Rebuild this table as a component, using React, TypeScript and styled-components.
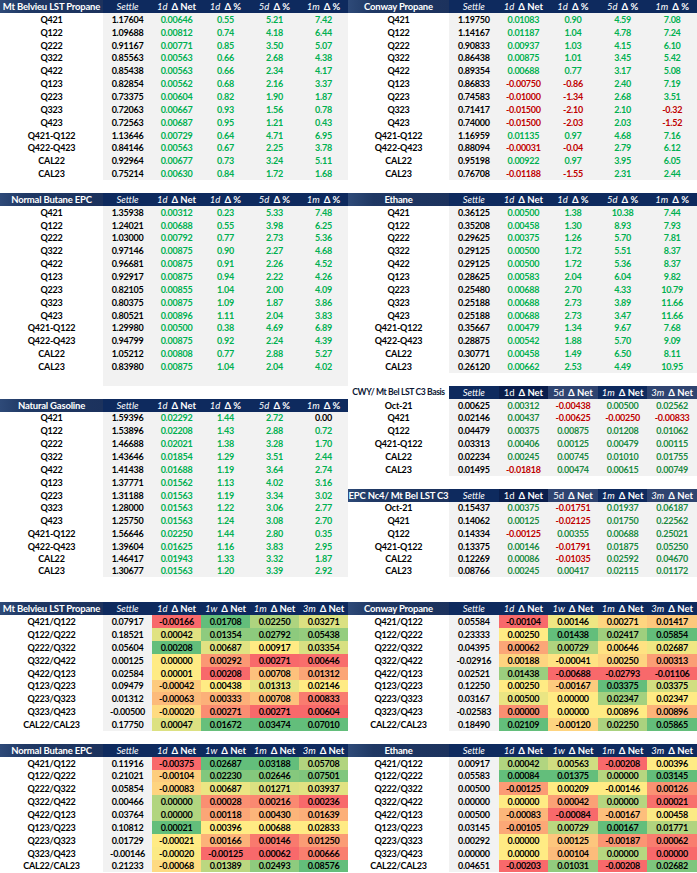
import React from "react";
import styled, { createGlobalStyle } from "styled-components";

const ROW = 12.87;
const SHORT = 10.8;

const GlobalStyle = createGlobalStyle`
  html, body {
    margin: 0;
    padding: 0;
    background: #fff;
  }
  body {
    font-family: Lato, "DejaVu Sans", sans-serif;
  }
`;

type Tone = "navy" | "deep" | "slate";
type Kind = "pct" | "basis" | "heat";
type Head = { pre: string; main?: string; upright?: boolean; tone?: Tone };

const PCT_HEADS: Head[] = [
  { pre: "Settle" },
  { pre: "1d", main: "Δ Net" },
  { pre: "1d", main: "Δ %" },
  { pre: "5d", main: "Δ %" },
  { pre: "1m", main: "Δ %" },
];

const BASIS_HEADS: Head[] = [
  { pre: "Settle", tone: "navy" },
  { pre: "1d", main: "Δ Net", upright: true, tone: "deep" },
  { pre: "5d", main: "Δ Net", upright: true, tone: "slate" },
  { pre: "1m", main: "Δ Net", tone: "navy" },
  { pre: "3m", main: "Δ Net", tone: "slate" },
];

const SPREAD_HEADS: Head[] = [
  { pre: "Settle" },
  { pre: "1d", main: "Δ Net" },
  { pre: "1w", main: "Δ Net" },
  { pre: "1m", main: "Δ Net" },
  { pre: "3m", main: "Δ Net" },
];

const rows = (text: string) =>
  text
    .trim()
    .split("\n")
    .map((l) => l.trim().split(/\s+/));

const mbPropane = rows(`
Q421 1.17604 0.00646 0.55 5.21 7.42
Q122 1.09688 0.00812 0.74 4.18 6.44
Q222 0.91167 0.00771 0.85 3.50 5.07
Q322 0.85563 0.00563 0.66 2.68 4.38
Q422 0.85438 0.00563 0.66 2.34 4.17
Q123 0.82854 0.00562 0.68 2.16 3.37
Q223 0.73375 0.00604 0.82 1.90 1.87
Q323 0.72063 0.00667 0.93 1.56 0.78
Q423 0.72563 0.00687 0.95 1.21 0.43
Q421-Q122 1.13646 0.00729 0.64 4.71 6.95
Q422-Q423 0.84146 0.00563 0.67 2.25 3.78
CAL22 0.92964 0.00677 0.73 3.24 5.11
CAL23 0.75214 0.00630 0.84 1.72 1.68
`);

const conwayPropane = rows(`
Q421 1.19750 0.01083 0.90 4.59 7.08
Q122 1.14167 0.01187 1.04 4.78 7.24
Q222 0.90833 0.00937 1.03 4.15 6.10
Q322 0.86438 0.00875 1.01 3.45 5.42
Q422 0.89354 0.00688 0.77 3.17 5.08
Q123 0.86833 -0.00750 -0.86 2.40 7.19
Q223 0.74583 -0.01000 -1.34 2.68 3.51
Q323 0.71417 -0.01500 -2.10 2.10 -0.32
Q423 0.74000 -0.01500 -2.03 2.03 -1.52
Q421-Q122 1.16959 0.01135 0.97 4.68 7.16
Q422-Q423 0.88094 -0.00031 -0.04 2.79 6.12
CAL22 0.95198 0.00922 0.97 3.95 6.05
CAL23 0.76708 -0.01188 -1.55 2.31 2.44
`);

const butaneEpc = rows(`
Q421 1.35938 0.00312 0.23 5.33 7.48
Q122 1.24021 0.00688 0.55 3.98 6.25
Q222 1.03000 0.00792 0.77 2.73 5.36
Q322 0.97146 0.00875 0.90 2.27 4.68
Q422 0.96681 0.00875 0.91 2.26 4.52
Q123 0.92917 0.00875 0.94 2.22 4.26
Q223 0.82105 0.00855 1.04 2.00 4.09
Q323 0.80375 0.00875 1.09 1.87 3.86
Q423 0.80521 0.00896 1.11 2.04 3.83
Q421-Q122 1.29980 0.00500 0.38 4.69 6.89
Q422-Q423 0.94799 0.00875 0.92 2.24 4.39
CAL22 1.05212 0.00808 0.77 2.88 5.27
CAL23 0.83980 0.00875 1.04 2.04 4.02
`);

const ethane = rows(`
Q421 0.36125 0.00500 1.38 10.38 7.44
Q122 0.35208 0.00458 1.30 8.93 7.93
Q222 0.29625 0.00375 1.26 5.70 7.81
Q322 0.29125 0.00500 1.72 5.51 8.37
Q422 0.29125 0.00500 1.72 5.36 8.37
Q123 0.28625 0.00583 2.04 6.04 9.82
Q223 0.25480 0.00688 2.70 4.33 10.79
Q323 0.25188 0.00688 2.73 3.89 11.66
Q423 0.25188 0.00688 2.73 3.47 11.66
Q421-Q122 0.35667 0.00479 1.34 9.67 7.68
Q422-Q423 0.28875 0.00542 1.88 5.70 9.09
CAL22 0.30771 0.00458 1.49 6.50 8.11
CAL23 0.26120 0.00662 2.53 4.49 10.95
`);

const natGasoline = rows(`
Q421 1.59396 0.02292 1.44 2.72 0.00
Q122 1.53896 0.02208 1.43 2.88 0.72
Q222 1.46688 0.02021 1.38 3.28 1.70
Q322 1.43646 0.01854 1.29 3.51 2.44
Q422 1.41438 0.01688 1.19 3.64 2.74
Q123 1.37771 0.01562 1.13 4.02 3.16
Q223 1.31188 0.01563 1.19 3.34 3.02
Q323 1.28000 0.01563 1.22 3.06 2.77
Q423 1.25750 0.01563 1.24 3.08 2.70
Q421-Q122 1.56646 0.02250 1.44 2.80 0.35
Q422-Q423 1.39604 0.01625 1.16 3.83 2.95
CAL22 1.46417 0.01943 1.33 3.32 1.87
CAL23 1.30677 0.01563 1.20 3.39 2.92
`);

const cwyBasis = rows(`
Oct-21 0.00625 0.00312 -0.00438 0.00500 0.02562
Q421 0.02146 0.00437 -0.00625 -0.00250 -0.00833
Q122 0.04479 0.00375 0.00875 0.01208 0.01062
Q421-Q122 0.03313 0.00406 0.00125 0.00479 0.00115
CAL22 0.02234 0.00245 0.00745 0.01010 0.01755
CAL23 0.01495 -0.01818 0.00474 0.00615 0.00749
`);

const epcBasis = rows(`
Oct-21 0.15437 0.00375 -0.01751 0.01937 0.06187
Q421 0.14062 0.00125 -0.02125 0.01750 0.22562
Q122 0.14334 -0.00125 0.00355 0.00688 0.25021
Q421-Q122 0.13375 0.00146 -0.01791 0.01875 0.05250
CAL22 0.12269 0.00086 -0.01035 0.02592 0.04670
CAL23 0.08766 0.00245 0.00417 0.02115 0.01172
`);

const mbSpreads = rows(`
Q421/Q122 0.07917 -0.00166 0.01708 0.02250 0.03271
Q122/Q222 0.18521 0.00042 0.01354 0.02792 0.05438
Q222/Q322 0.05604 0.00208 0.00687 0.00917 0.03354
Q322/Q422 0.00125 0.00000 0.00292 0.00271 0.00646
Q422/Q123 0.02584 0.00001 0.00208 0.00708 0.01312
Q123/Q223 0.09479 -0.00042 0.00438 0.01313 0.02146
Q223/Q323 0.01312 -0.00063 0.00333 0.00708 0.00833
Q323/Q423 -0.00500 -0.00020 0.00271 0.00271 0.00604
CAL22/CAL23 0.17750 0.00047 0.01672 0.03474 0.07010
`);

const conwaySpreads = rows(`
Q421/Q122 0.05584 -0.00104 0.00146 0.00271 0.01417
Q122/Q222 0.23333 0.00250 0.01438 0.02417 0.05854
Q222/Q322 0.04395 0.00062 0.00729 0.00646 0.02687
Q322/Q422 -0.02916 0.00188 -0.00041 0.00250 0.00313
Q422/Q123 0.02521 0.01438 -0.00688 -0.02793 -0.01106
Q123/Q223 0.12250 0.00250 -0.00167 0.03375 0.03375
Q223/Q323 0.03167 0.00500 0.00000 0.02347 0.02347
Q323/Q423 -0.02583 0.00000 0.00000 0.00896 0.00896
CAL22/CAL23 0.18490 0.02109 -0.00120 0.02250 0.05865
`);

const butaneSpreads = rows(`
Q421/Q122 0.11916 -0.00375 0.02687 0.03188 0.05708
Q122/Q222 0.21021 -0.00104 0.02230 0.02646 0.07501
Q222/Q322 0.05854 -0.00083 0.00687 0.01271 0.03937
Q322/Q422 0.00466 0.00000 0.00028 0.00216 0.00236
Q422/Q123 0.03764 0.00000 0.00118 0.00430 0.01639
Q123/Q223 0.10812 0.00021 0.00396 0.00688 0.02833
Q223/Q323 0.01729 -0.00021 0.00166 0.00146 0.01250
Q323/Q423 -0.00146 -0.00020 -0.00125 0.00062 0.00666
CAL22/CAL23 0.21233 -0.00068 0.01389 0.02493 0.08576
`);

const ethaneSpreads = rows(`
Q421/Q122 0.00917 0.00042 0.00563 -0.00208 0.00396
Q122/Q222 0.05583 0.00084 0.01375 0.00000 0.03145
Q222/Q322 0.00500 -0.00125 0.00209 -0.00146 0.00126
Q322/Q422 0.00000 0.00000 0.00042 0.00000 0.00021
Q422/Q123 0.00500 -0.00083 -0.00084 -0.00167 0.00458
Q123/Q223 0.03145 -0.00105 0.00729 0.00167 0.01771
Q223/Q323 0.00292 0.00000 0.00125 -0.00187 0.00062
Q323/Q423 0.00000 0.00000 0.00104 0.00000 0.00000
CAL22/CAL23 0.04651 -0.00203 0.01031 -0.00208 0.02682
`);

// Excel style three colour scale: min red, 50th percentile yellow, max green
const RED = [248, 105, 107];
const YELLOW = [255, 235, 132];
const GREEN = [99, 190, 123];

const mix = (a: number[], b: number[], t: number) =>
  `rgb(${a.map((v, i) => Math.round(v + (b[i] - v) * t)).join(",")})`;

const heatColor = (v: number, column: number[]) => {
  const s = [...column].sort((a, b) => a - b);
  const min = s[0];
  const max = s[s.length - 1];
  const pos = (s.length - 1) * 0.5;
  const lo = Math.floor(pos);
  const mid = s[lo] + (s[Math.ceil(pos)] - s[lo]) * (pos - lo);
  if (v <= mid) return mix(RED, YELLOW, mid === min ? 1 : (v - min) / (mid - min));
  return mix(YELLOW, GREEN, max === mid ? 0 : (v - mid) / (max - mid));
};

const Page = styled.div`
  display: grid;
  grid-template-columns: 348px 349px;
  width: 697px;
`;

const Side = styled.div`
  display: flex;
  flex-direction: column;
`;

const Gap = styled.div<{ $rows: number }>`
  height: ${(p) => p.$rows * ROW}px;
`;

const Row = styled.div<{ $label: number; $short?: boolean }>`
  display: grid;
  grid-template-columns: ${(p) => p.$label}px repeat(5, minmax(0, 1fr));
  height: ${(p) => (p.$short ? SHORT : ROW)}px;
`;

const HEAD_BG: Record<Tone, string> = {
  navy: "#0e2a5e",
  deep: "#0a1e4c",
  slate: "#2f4470",
};

const TitleCell = styled.div<{ $plain?: boolean }>`
  display: flex;
  align-items: center;
  justify-content: center;
  white-space: nowrap;
  overflow: hidden;
  font-size: ${(p) => (p.$plain ? 8.6 : 9.5)}px;
  font-weight: 700;
  letter-spacing: ${(p) => (p.$plain ? -0.4 : -0.2)}px;
  color: ${(p) => (p.$plain ? "#0b1633" : "#fff")};
  background: ${(p) =>
    p.$plain
      ? "#fff"
      : "linear-gradient(90deg, #2e4a78 0%, #1f3864 25%, #1c325d 100%)"};
`;

const HeadCell = styled.div<{ $tone: Tone }>`
  display: flex;
  align-items: center;
  justify-content: center;
  gap: 4px;
  white-space: nowrap;
  overflow: hidden;
  font-size: 9.5px;
  color: #fff;
  background: ${(p) => HEAD_BG[p.$tone]};
`;

const Pre = styled.span<{ $upright?: boolean }>`
  font-style: ${(p) => (p.$upright ? "normal" : "italic")};
  font-weight: 400;
`;

const Main = styled.span`
  font-weight: 700;
`;

const LabelCell = styled.div`
  display: flex;
  align-items: center;
  justify-content: center;
  white-space: nowrap;
  font-size: 9px;
  font-weight: 700;
  letter-spacing: -0.2px;
  color: #000;
  background: #fff;
`;

const Cell = styled.div<{ $bg: string; $color: string }>`
  display: flex;
  align-items: center;
  justify-content: center;
  white-space: nowrap;
  overflow: hidden;
  font-size: 9px;
  font-weight: 700;
  letter-spacing: -0.25px;
  color: ${(p) => p.$color};
  background: ${(p) => p.$bg};
`;

const Filler = styled.div`
  grid-column: 2 / -1;
  background: #f2f2f2;
`;

const GRAY = "#f2f2f2";

const signColor = (v: number, kind: Kind) => {
  if (v === 0) return "#000";
  if (v < 0) return "#c00000";
  return kind === "basis" ? "#198a42" : "#00b050";
};

type TableProps = {
  title: string;
  heads: Head[];
  data: string[][];
  kind: Kind;
  label: number;
  plainTitle?: boolean;
  shortAt?: number;
  filler?: boolean;
};

const Table: React.FC<TableProps> = ({
  title,
  heads,
  data,
  kind,
  label,
  plainTitle,
  shortAt,
  filler,
}) => {
  const columns = [2, 3, 4, 5].map((c) => data.map((r) => parseFloat(r[c])));
  return (
    <div>
      <Row $label={label}>
        <TitleCell $plain={plainTitle}>{title}</TitleCell>
        {heads.map((h, i) => (
          <HeadCell key={i} $tone={h.tone ?? "navy"}>
            <Pre $upright={h.upright}>{h.pre}</Pre>
            {h.main && <Main>{h.main}</Main>}
          </HeadCell>
        ))}
      </Row>
      {data.map((r, ri) => (
        <Row key={r[0]} $label={label} $short={shortAt === ri}>
          <LabelCell>{r[0]}</LabelCell>
          <Cell $bg={GRAY} $color="#000">
            {r[1]}
          </Cell>
          {r.slice(2).map((v, ci) => {
            const n = parseFloat(v);
            return kind === "heat" ? (
              <Cell key={ci} $bg={heatColor(n, columns[ci])} $color="#000">
                {v}
              </Cell>
            ) : (
              <Cell key={ci} $bg={GRAY} $color={signColor(n, kind)}>
                {v}
              </Cell>
            );
          })}
        </Row>
      ))}
      {filler && (
        <Row $label={label}>
          <LabelCell />
          <Filler />
        </Row>
      )}
    </div>
  );
};

export default function App() {
  return (
    <>
      <GlobalStyle />
      <Page>
        <Side>
          <Table title="Mt Belvieu LST Propane" heads={PCT_HEADS} data={mbPropane} kind="pct" label={103} />
          <Gap $rows={1} />
          <Table title="Normal Butane EPC" heads={PCT_HEADS} data={butaneEpc} kind="pct" label={103} filler />
          <Gap $rows={1} />
          <Table title="Natural Gasoline" heads={PCT_HEADS} data={natGasoline} kind="pct" label={103} shortAt={11} />
          <Gap $rows={2} />
          <Table title="Mt Belvieu LST Propane" heads={SPREAD_HEADS} data={mbSpreads} kind="heat" label={103} />
          <Gap $rows={1} />
          <Table title="Normal Butane EPC" heads={SPREAD_HEADS} data={butaneSpreads} kind="heat" label={103} />
        </Side>
        <Side>
          <Table title="Conway Propane" heads={PCT_HEADS} data={conwayPropane} kind="pct" label={101} />
          <Gap $rows={1} />
          <Table title="Ethane" heads={PCT_HEADS} data={ethane} kind="pct" label={101} />
          <Gap $rows={1} />
          <Table title="CWY/ Mt Bel LST C3 Basis" heads={BASIS_HEADS} data={cwyBasis} kind="basis" label={101} plainTitle />
          <Gap $rows={1} />
          <Table title="EPC Nc4/ Mt Bel LST C3" heads={BASIS_HEADS} data={epcBasis} kind="basis" label={101} shortAt={4} />
          <Gap $rows={2} />
          <Table title="Conway Propane" heads={SPREAD_HEADS} data={conwaySpreads} kind="heat" label={101} />
          <Gap $rows={1} />
          <Table title="Ethane" heads={SPREAD_HEADS} data={ethaneSpreads} kind="heat" label={101} />
        </Side>
      </Page>
    </>
  );
}
